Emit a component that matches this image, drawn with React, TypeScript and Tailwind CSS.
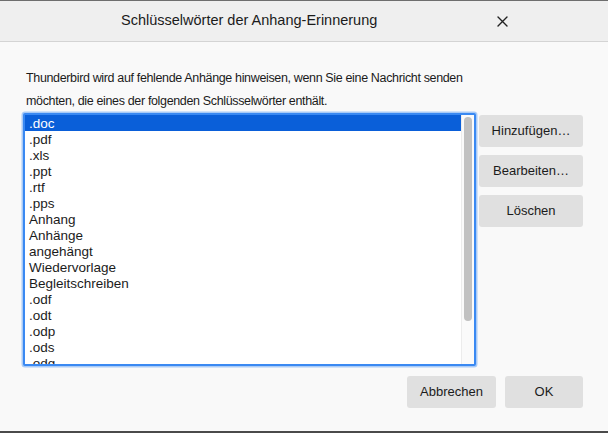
import React from 'react';

const keywords = [
  '.doc', '.pdf', '.xls', '.ppt', '.rtf', '.pps', 'Anhang', 'Anhänge', 'angehängt',
  'Wiedervorlage', 'Begleitschreiben', '.odf', '.odt', '.odp', '.ods', '.odg',
];

const font = { fontFamily: '"Liberation Sans", Arial, sans-serif' };

export default function App() {
  return (
    <div className="w-[608px] h-[433px] flex flex-col bg-[#f9f9f9] text-[#1b1b1b] overflow-hidden" style={font}>
      {/* window edge */}
      <div className="h-px bg-[#6e6e6e]" />

      {/* Title bar */}
      <div className="h-[41px] shrink-0 relative flex items-center pl-[121px] bg-[#efefef] border-b border-[#d4d4d4]">
        <span className="text-[14.5px]">Schlüsselwörter der Anhang-Erinnerung</span>
        <button className="absolute right-[98px] top-[12px] w-[16px] h-[16px] flex items-center justify-center">
          <svg width="11" height="11" viewBox="0 0 11 11" stroke="#222" strokeWidth="1.4" strokeLinecap="round">
            <path d="M1 1L10 10M10 1L1 10" />
          </svg>
        </button>
      </div>

      {/* Body */}
      <div className="flex-1 flex flex-col pl-[23px] pr-[25px] pt-[25px]">
        <p className="text-[12.5px] leading-[23px] tracking-[-0.35px] pl-[3px]">
          Thunderbird wird auf fehlende Anhänge hinweisen, wenn Sie eine Nachricht senden
          <br />
          möchten, die eines der folgenden Schlüsselwörter enthält.
        </p>

        <div className="flex items-start">
          {/* Keyword list */}
          <div className="w-[453px] h-[253px] bg-white border-2 border-[#3a89f2] shadow-[0_0_0_1.5px_#a9cbf7] rounded-[2px] flex overflow-hidden">
            <ul className="flex-1 text-[13.5px] leading-[17px]">
              {keywords.map((k, i) => (
                <li
                  key={k}
                  className={i === 0 ? 'h-[16px] pl-[4px] bg-[#0a5fd9] text-white' : 'h-[16px] pl-[4px]'}
                >
                  {k}
                </li>
              ))}
            </ul>
            <div className="w-[13px] bg-[#fafafa] border-l border-[#ececec] pt-[2px] flex justify-center">
              <div className="w-[8px] h-[204px] rounded-full bg-[#c1c1c1]" />
            </div>
          </div>

          {/* Side buttons */}
          <div className="ml-[3px] mt-[2px] flex flex-col gap-[8px]">
            {['Hinzufügen…', 'Bearbeiten…', 'Löschen'].map((label) => (
              <button key={label} className="w-[104px] h-[32px] bg-[#e0e0e0] rounded-[3px] text-[13px]">
                {label}
              </button>
            ))}
          </div>
        </div>

        {/* Footer buttons */}
        <div className="mt-[10px] flex justify-end gap-[9px]">
          <button className="w-[89px] h-[32px] bg-[#e0e0e0] rounded-[3px] text-[13px]">Abbrechen</button>
          <button className="w-[78px] h-[32px] bg-[#e0e0e0] rounded-[3px] text-[13px]">OK</button>
        </div>
      </div>

      <div className="h-[2px] bg-[#4a4a4a]" />
    </div>
  );
}
